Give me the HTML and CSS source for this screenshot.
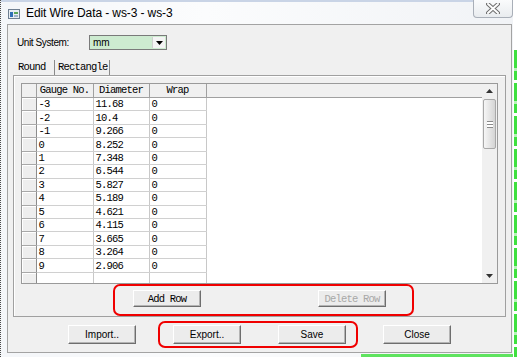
FILE: index.html
```html
<!DOCTYPE html>
<html lang="en">
<head>
  <meta charset="UTF-8" />
  <title>Edit Wire Data - ws-3 - ws-3</title>
  <link rel="stylesheet" href="styles.css">
</head>
<body>

<div class="screen">
  <div class="window">
    <div class="titlebar">
      <svg class="app-icon" width="12" height="10" viewBox="0 0 12 10">
        <rect x="0.5" y="0.5" width="11" height="9" fill="#e8edf3" stroke="#6f7f91"/>
        <rect x="2" y="3" width="3" height="5" fill="#2f6fb5"/>
        <rect x="6" y="3" width="4" height="2" fill="#5aa65a"/>
        <rect x="6" y="6" width="4" height="2" fill="#9fb3c8"/>
      </svg>
      <span class="title">Edit Wire Data - ws-3 - ws-3</span>
      <div class="close-btn">
        <svg width="14" height="11" viewBox="0 0 14 11">
          <path d="M2 1 L12 10 M12 1 L2 10" stroke="#6d6d6d" stroke-width="4" stroke-linecap="round"/>
          <path d="M2 1 L12 10 M12 1 L2 10" stroke="#fdfdfd" stroke-width="2" stroke-linecap="round"/>
        </svg>
      </div>
    </div>

    <div class="client">
      <div class="unit-row">
        <label>Unit System:</label>
        <div class="combo">
          <span class="combo-text">mm</span>
          <span class="combo-btn">
            <svg width="7" height="4" viewBox="0 0 7 4"><path d="M0 0 H7 L3.5 4 Z" fill="#000"/></svg>
          </span>
        </div>
      </div>

      <div class="tabs">
        <span class="tab active">Round</span>
        <span class="tab">Rectangle</span>
      </div>

      <div class="tab-page">
        <div class="grid">
          <div class="grid-main">
            <table class="wires">
              <colgroup>
                <col class="c-head"><col class="c-gauge"><col class="c-dia"><col class="c-wrap"><col>
              </colgroup>
              <thead>
                <tr><th class="corner"></th><th>Gauge No.</th><th>Diameter</th><th>Wrap</th><th class="fill"></th></tr>
              </thead>
              <tbody id="rows"></tbody>
            </table>
          </div>
          <div class="scrollbar">
            <div class="sb-btn">
              <svg width="7" height="4" viewBox="0 0 7 4"><path d="M0 4 H7 L3.5 0 Z" fill="#333"/></svg>
            </div>
            <div class="sb-track">
              <div class="sb-thumb"><span class="grip"></span></div>
            </div>
            <div class="sb-btn">
              <svg width="7" height="4" viewBox="0 0 7 4"><path d="M0 0 H7 L3.5 4 Z" fill="#333"/></svg>
            </div>
          </div>
        </div>

        <div class="row-actions">
          <button class="btn mono">Add Row</button>
          <button class="btn mono" disabled>Delete Row</button>
        </div>
        <div class="mark mark-rows"></div>
      </div>

      <div class="dialog-actions">
        <button class="btn">Import..</button>
        <button class="btn">Export..</button>
        <button class="btn">Save</button>
        <button class="btn">Close</button>
        <div class="mark mark-save"></div>
      </div>
    </div>
    <div class="frame-foot"></div>
  </div>
  <div class="glow"></div>
</div>

<script>
  const wires = [
    ["-3", "11.68", "0"],
    ["-2", "10.4", "0"],
    ["-1", "9.266", "0"],
    ["0", "8.252", "0"],
    ["1", "7.348", "0"],
    ["2", "6.544", "0"],
    ["3", "5.827", "0"],
    ["4", "5.189", "0"],
    ["5", "4.621", "0"],
    ["6", "4.115", "0"],
    ["7", "3.665", "0"],
    ["8", "3.264", "0"],
    ["9", "2.906", "0"],
    ["", "", ""]
  ];

  const body = document.getElementById('rows');
  wires.forEach(w => {
    const tr = document.createElement('tr');
    tr.innerHTML = `
      <td class="rh"></td>
      <td>${w[0]}</td>
      <td>${w[1]}</td>
      <td>${w[2]}</td>
      <td class="fill"></td>
    `;
    body.appendChild(tr);
  });
</script>

</body>
</html>
```

FILE: styles.css
```css
body {
  margin: 0;
  background: #ffffff;
  font-family: "Liberation Sans", Arial, sans-serif;
  color: #000;
}

.screen {
  display: flex;
  width: 517px;
  height: 357px;
  overflow: hidden;
}

.window {
  width: 513px;
  height: 357px;
  border-left: 1px dotted #4a4a4a;
  background: linear-gradient(to right, #f4f6f9, #fbfcfd 40%, #f1f3f6);
  display: flex;
  flex-direction: column;
}

/* Title bar */
.titlebar {
  height: 24px;
  display: flex;
  align-items: flex-start;
  border-top: 2px solid #c9d4e6;
  box-sizing: border-box;
}

.app-icon {
  margin: 7px 0 0 7px;
}

.title {
  margin: 4px 0 0 6px;
  font-size: 12px;
  letter-spacing: -0.1px;
  color: #000;
}

.close-btn {
  margin-left: auto;
  margin-top: -2px;
  width: 38px;
  height: 17px;
  border: 1px solid #a9afb8;
  border-top: none;
  border-radius: 0 0 4px 4px;
  background: linear-gradient(#fafbfc, #e9ecef);
  display: flex;
  align-items: center;
  justify-content: center;
}

/* Client area */
.client {
  margin-left: 6px;
  width: 503px;
  height: 327px;
  border: 1px solid #a3a3a3;
  background: #f0f0f0;
  position: relative;
}

.frame-foot {
  flex: 1;
  margin-left: 360px;
  border-bottom: 3px solid #5fe35f;
}

.glow {
  width: 3px;
  margin-top: 50px;
  margin-left: 1px;
  height: 307px;
  background: repeating-linear-gradient(#3fe03f 0 18px, #b8f2b8 18px 21px, #3fe03f 21px 30px, #ffffff 30px 33px);
}

.unit-row {
  display: flex;
  align-items: center;
  padding: 10px 0 0 9px;
  height: 15px;
}

.unit-row label {
  width: 72px;
  font-size: 10px;
  letter-spacing: -0.4px;
}

.combo {
  width: 76px;
  height: 13px;
  border: 1px solid #7a7a7a;
  background: #cdebd0;
  display: flex;
  align-items: center;
}

.combo-text {
  flex: 1;
  font-size: 10px;
  padding-left: 3px;
}

.combo-btn {
  width: 12px;
  height: 11px;
  margin-right: 1px;
  background: #f4f4f4;
  border-left: 1px solid #d0d0d0;
  display: flex;
  align-items: center;
  justify-content: center;
}

/* Tabs */
.tabs {
  display: flex;
  margin: 10px 0 0 5px;
  height: 15px;
}

.tab,
.mono,
.wires {
  font-family: "Liberation Mono", "Courier New", monospace;
  font-size: 10.5px;
  letter-spacing: -0.8px;
}

.tab {
  box-sizing: border-box;
  padding: 1px 0 0 3px;
  line-height: 13px;
  border-right: 1px solid #8a8a8a;
  width: 55px;
}

.tab.active {
  padding-left: 5px;
  width: 42px;
}

.tab-page {
  position: relative;
  margin: 0 5px 0 5px;
  border: 1px solid #a0a0a0;
  box-shadow: inset 1px 1px #ffffff;
  padding: 7px 7px 0 7px;
  height: 233px;
}

/* Grid */
.grid {
  display: flex;
  height: 199px;
  border: 1px solid #9a9a9a;
  background: #ffffff;
}

.grid-main {
  flex: 1;
  overflow: hidden;
}

.wires {
  width: 100%;
  border-collapse: collapse;
  table-layout: fixed;
}

.c-head { width: 14px; }
.c-gauge { width: 57px; }
.c-dia { width: 56px; }
.c-wrap { width: 57px; }

.wires th,
.wires td {
  height: 13.46px;
  padding: 0 0 0 2px;
  line-height: 12px;
  font-weight: normal;
  white-space: nowrap;
  box-sizing: border-box;
}

.wires th {
  background: #f0f0f0;
  border-right: 1px solid #a0a0a0;
  border-bottom: 1px solid #a0a0a0;
  text-align: center;
  padding: 0;
}

.wires th.fill {
  border-right: none;
}

.wires td {
  border-right: 1px solid #c8c8c8;
  border-bottom: 1px solid #d0d0d0;
}

.wires td.rh {
  background: #eeeeee;
  border-right: 1px solid #8c8c8c;
  border-bottom: 1px solid #a8a8a8;
  box-shadow: inset 1px 1px #ffffff;
}

.wires td.fill {
  border: none;
  background: #ffffff;
}

/* Scrollbar */
.scrollbar {
  width: 15px;
  background: #f0f0f0;
  display: flex;
  flex-direction: column;
}

.sb-btn {
  height: 14px;
  display: flex;
  align-items: center;
  justify-content: center;
}

.sb-track {
  flex: 1;
  padding-top: 1px;
}

.sb-thumb {
  margin: 0 1px;
  height: 48px;
  border: 1px solid #a8a8a8;
  border-radius: 2px;
  background: linear-gradient(to right, #f6f6f6, #e2e2e2 60%, #d4d4d4);
  display: flex;
  align-items: center;
  justify-content: center;
}

.grip {
  width: 6px;
  height: 5px;
  border-top: 1px solid #8a8a8a;
  border-bottom: 1px solid #8a8a8a;
  background: linear-gradient(#ffffff 0 2px, #8a8a8a 2px 3px, #ffffff 3px);
}

/* Buttons */
.btn {
  height: 17px;
  width: 68px;
  padding: 0;
  background: #ececec;
  border: 1px solid;
  border-color: #ffffff #6e6e6e #6e6e6e #ffffff;
  box-shadow: inset -1px -1px #b4b4b4;
  font-family: "Liberation Sans", Arial, sans-serif;
  font-size: 10px;
  color: #000;
}

.btn.mono {
  font-family: "Liberation Mono", "Courier New", monospace;
  font-size: 10.5px;
}

.btn:disabled {
  color: #a8a8a8;
}

.row-actions {
  display: flex;
  gap: 117px;
  padding: 6px 0 0 112px;
}

.dialog-actions {
  position: relative;
  display: flex;
  gap: 37px;
  padding: 8px 0 0 60px;
}

.dialog-actions .btn {
  height: 19px;
}

/* Highlight marks drawn over the dialog */
.mark {
  position: absolute;
  border: 2px solid #f00000;
  border-radius: 7px;
  box-sizing: border-box;
}

.mark-rows {
  left: 99px;
  top: 208px;
  width: 301px;
  height: 32px;
}

.mark-save {
  left: 150px;
  top: 4px;
  width: 200px;
  height: 27px;
}
```
